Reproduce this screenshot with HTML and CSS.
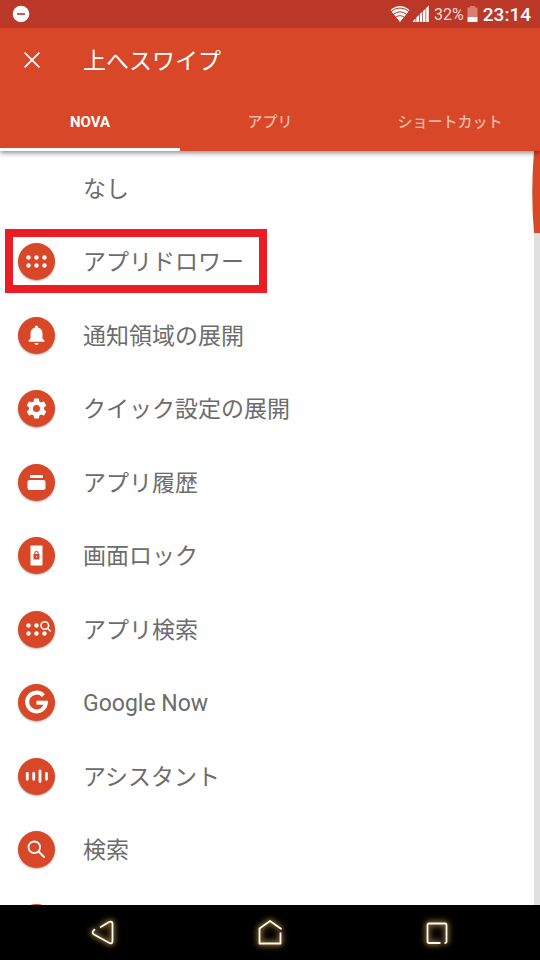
FILE: index.html
```html
<!DOCTYPE html>
<html lang="ja">
<head>
<meta charset="utf-8">
<meta name="viewport" content="width=device-width, initial-scale=1">
<title>上へスワイプ</title>
<link rel="stylesheet" href="styles.css">
</head>
<body>
<header class="top">
  <div class="status">
    <svg class="dnd" width="18" height="18" viewBox="0 0 18 18" aria-hidden="true"><circle cx="9" cy="9" r="8.3" fill="#fff"/><path d="M5 9h8" stroke="#bb3727" stroke-width="1.6"/></svg>
    <div class="status-right">
      <svg width="20" height="18" viewBox="0 0 20 18" aria-hidden="true"><path d="M0.5 5.2Q10-3.2 19.500 5.200L10 17z" fill="#fff"/><path d="M0 7.300Q10-1.400 20 7.300M2.200 10.200Q10 3.400 17.800 10.200M4.500 13Q10 8.300 15.500 13" fill="none" stroke="#bb3727" stroke-width="1"/></svg>
      <svg width="16" height="18" viewBox="0 0 16 18" aria-hidden="true"><path d="M0 17v-1l2.500-2.500V17zM3.300 17v-4.500L6 10v7zM6.800 17V9l2.500-2.300V17zM10 17V6l2.500-2.200V17zM13.200 17V3l2.600-2.600V17z" fill="#fff"/></svg>
      <span class="percent">32%</span>
      <svg class="battery" width="11" height="18" viewBox="0 0 11 18" aria-hidden="true"><path d="M3 1h5v1.500h2.500V12H.500V2.500H3z" fill="#db8071"/><path d="M.500 12h10v5H.500z" fill="#fff"/></svg>
      <time class="clock">23:14</time>
    </div>
  </div>
  <div class="appbar">
    <button class="close" type="button" aria-label="閉じる"><svg width="16" height="16" viewBox="0 0 16 16"><path d="M.600.600l14.800 14.800M15.400.600L.600 15.400" stroke="#fff" stroke-width="1.800"/></svg></button>
    <h1>上へスワイプ</h1>
  </div>
  <nav class="tabs">
    <button type="button" class="tab active">NOVA</button>
    <button type="button" class="tab">アプリ</button>
    <button type="button" class="tab">ショートカット</button>
  </nav>
</header>

<main class="content">
  <ul class="list">
    <li><button type="button" class="row"><span class="blank"></span><span class="label">なし</span></button></li>
    <li class="marked"><button type="button" class="row"><span class="icon"><svg viewBox="0 0 37 37"><g fill="#fff"><circle cx="10.500" cy="14.500" r="2.200"/><circle cx="18.500" cy="14.500" r="2.200"/><circle cx="26.500" cy="14.500" r="2.200"/><circle cx="10.500" cy="22.500" r="2.200"/><circle cx="18.500" cy="22.500" r="2.200"/><circle cx="26.500" cy="22.500" r="2.200"/></g></svg></span><span class="label">アプリドロワー</span></button></li>
    <li><button type="button" class="row"><span class="icon"><svg viewBox="0 0 37 37"><path d="M17 10.500v-.500a1.500 1.500 0 0 1 3 0v.500c3 .700 4.500 3 4.500 6v5l2 2.300v1H10.500v-1l2-2.300v-5c0-3 1.500-5.300 4.500-6zM16.500 26h4a2 2 0 0 1-4 0z" fill="#fff"/></svg></span><span class="label">通知領域の展開</span></button></li>
    <li><button type="button" class="row"><span class="icon"><svg viewBox="0 0 37 37"><path transform="translate(6.500 6.500)" fill="#fff" d="M19.400 13c.040-.320.070-.650.070-1s-.030-.680-.070-1l2.100-1.650c.200-.150.240-.420.120-.640l-2-3.460c-.120-.220-.390-.300-.610-.220l-2.500 1c-.520-.400-1.080-.730-1.690-.980l-.380-2.650A.490.490 0 0 0 14 2h-4c-.250 0-.460.180-.490.420l-.380 2.650c-.610.250-1.170.590-1.690.980l-2.500-1c-.230-.090-.490 0-.610.220l-2 3.460c-.130.220-.070.490.120.640L4.570 11c-.040.320-.070.650-.070 1s.030.680.070 1l-2.110 1.650c-.190.150-.240.420-.120.640l2 3.460c.120.220.390.300.610.220l2.500-1c.520.400 1.080.730 1.690.980l.380 2.650c.030.240.240.420.490.420h4c.250 0 .460-.180.490-.420l.380-2.650c.610-.250 1.170-.590 1.690-.980l2.500 1c.230.090.490 0 .610-.220l2-3.460c.120-.220.070-.490-.120-.640zM12 15.500a3.500 3.500 0 1 1 0-7 3.500 3.500 0 0 1 0 7z"/></svg></span><span class="label">クイック設定の展開</span></button></li>
    <li><button type="button" class="row"><span class="icon"><svg viewBox="0 0 37 37"><g fill="#fff"><rect x="12" y="11" width="13" height="3" rx="1"/><rect x="9.500" y="16" width="18" height="10" rx="2"/></g></svg></span><span class="label">アプリ履歴</span></button></li>
    <li><button type="button" class="row"><span class="icon"><svg viewBox="0 0 37 37"><rect x="12.500" y="8.500" width="12" height="20" rx=".800" fill="#fff"/><rect x="15.500" y="17" width="6" height="5.500" rx=".600" fill="#d84727"/><path d="M16.800 17.500v-1.300a1.700 1.700 0 0 1 3.400 0v1.300" fill="none" stroke="#d84727" stroke-width="1.100"/><circle cx="18.500" cy="19.700" r=".700" fill="#fff"/></svg></span><span class="label">画面ロック</span></button></li>
    <li><button type="button" class="row"><span class="icon"><svg viewBox="0 0 37 37"><g fill="#fff"><circle cx="10.500" cy="14.500" r="2.200"/><circle cx="18.500" cy="14.500" r="2.200"/><circle cx="10.500" cy="22.500" r="2.200"/><circle cx="18.500" cy="22.500" r="2.200"/><circle cx="26.500" cy="22.500" r="2.200"/></g><g fill="none" stroke="#fff" stroke-width="1.600"><circle cx="26.800" cy="14.500" r="3.800"/><path d="M29.500 17.200l3.300 3.300"/></g></svg></span><span class="label">アプリ検索</span></button></li>
    <li><button type="button" class="row"><span class="icon"><svg viewBox="0 0 37 37"><path d="M25.400 11.600A9.400 9.400 0 1 0 27.900 18.700H18.500" fill="none" stroke="#fff" stroke-width="4"/></svg></span><span class="label">Google Now</span></button></li>
    <li><button type="button" class="row"><span class="icon"><svg viewBox="0 0 37 37"><path d="M9.300 15.300v6M15.700 15.300v6M22 13v10.600M28.500 15.300v6" stroke="#fff" stroke-width="2.800" stroke-linecap="round"/></svg></span><span class="label">アシスタント</span></button></li>
    <li><button type="button" class="row"><span class="icon"><svg viewBox="0 0 37 37"><g fill="none" stroke="#fff" stroke-width="1.800"><circle cx="16.300" cy="16.300" r="5.800"/><path d="M20.500 20.500l6.200 6.200"/></g></svg></span><span class="label">検索</span></button></li>
    <li><button type="button" class="row" aria-label="次の項目"><span class="icon"></span></button></li>
  </ul>
  <div class="track"><svg class="thumb" width="8" height="82" viewBox="0 0 8 82" aria-hidden="true"><path d="M2 0Q-1.500 41 2 82H8V0z" fill="#d84727"/></svg></div>
</main>

<nav class="softkeys">
  <button type="button" aria-label="戻る"><svg viewBox="0 0 30 30"><path d="M12 9.500L21 4q3.500-1.200 3.500 2v17q0 3.500-3.500 1.800L6 16.500q-2.500-1.700-.500-4l1.500-1.300"/></svg></button>
  <button type="button" aria-label="ホーム"><svg viewBox="0 0 30 30"><path d="M26 11.500v-.800L15 3 4.500 10.500V25.500H25.500V14.500"/></svg></button>
  <button type="button" aria-label="履歴"><svg viewBox="0 0 30 30"><path d="M18.500 25H7q-1.500 0-1.500-1.500V7Q5.500 5.500 7 5.500H23q1.500 0 1.500 1.500V23.500q0 1.500-2 1.500"/></svg></button>
</nav>
</body>
</html>
```
FILE: styles.css
```css
*,
*::after {
  box-sizing: border-box;
}

body {
  margin: 0;
  height: 100vh;
  display: flex;
  flex-direction: column;
  background: #fff;
  font-family: Roboto, "Noto Sans CJK JP", sans-serif;
  color: #6c6c6c;
}

button {
  margin: 0;
  padding: 0;
  border: 0;
  background: none;
  color: inherit;
  font: inherit;
}

.top {
  position: relative;
  z-index: 1;
  flex: none;
  background: #d84727;
  color: #fff;
  box-shadow: 0 2px 5px rgba(0, 0, 0, 0.45);
}

.status {
  height: 28px;
  padding: 0 9px 0 12px;
  display: flex;
  align-items: center;
  justify-content: space-between;
  background: #bb3727;
}

.status-right {
  display: flex;
  align-items: center;
  gap: 3px;
}

.percent {
  margin-left: 2px;
  padding-top: 2px;
  font-size: 16px;
  line-height: 28px;
  color: #f6ddd9;
}

.clock {
  margin-left: 2px;
  padding-top: 2px;
  font-size: 19px;
  font-weight: 500;
  line-height: 28px;
}

.appbar {
  height: 64px;
  display: flex;
  align-items: center;
}

.close {
  width: 83px;
  height: 48px;
  padding-left: 24px;
  display: flex;
  align-items: center;
}

h1 {
  margin: 0;
  padding-top: 4px;
  font-size: 23px;
  font-weight: 400;
  line-height: 32px;
}

.tabs {
  display: grid;
  grid-template-columns: repeat(3, 1fr);
}

.tab {
  height: 59px;
  padding-top: 4px;
  border-bottom: 3px solid transparent;
  font-size: 15px;
  font-weight: 500;
  line-height: 24px;
  color: #f2b9aa;
}

.tab.active {
  border-color: #fff;
  font-weight: 700;
  color: #fff;
}

.content {
  flex: 1;
  min-height: 0;
  display: flex;
  overflow: hidden;
}

.list {
  flex: 1;
  margin: 0;
  padding: 0;
  list-style: none;
}

.list li {
  position: relative;
  height: 73px;
}

.list li:nth-child(odd):not(:last-child) {
  height: 74px;
}

.row {
  width: 100%;
  height: 100%;
  padding-left: 18px;
  display: flex;
  align-items: center;
  gap: 28px;
  font-size: 23px;
  line-height: 32px;
  text-align: left;
}

.label {
  padding-top: 3px;
}

.icon,
.blank {
  flex: none;
  width: 37px;
  height: 37px;
}

.icon {
  border-radius: 50%;
  background: #d84727;
  box-shadow: 0 1px 2px rgba(0, 0, 0, 0.3);
}

.icon svg {
  display: block;
}

.marked::after {
  content: "";
  position: absolute;
  top: 4px;
  left: 5px;
  width: 262px;
  height: 64px;
  border: 8px solid #ec1c24;
  pointer-events: none;
}

.track {
  width: 8px;
  background: linear-gradient(to right, transparent 2px, #e0e0e0 2px);
}

.thumb {
  display: block;
}

.softkeys {
  flex: none;
  height: 55px;
  padding: 0 20px;
  display: grid;
  grid-template-columns: repeat(3, 1fr);
  place-items: center;
  background: #000;
}

.softkeys button {
  display: flex;
}

.softkeys svg {
  width: 30px;
  height: 30px;
  overflow: visible;
  fill: none;
  stroke: #fffbee;
  stroke-width: 1.8;
  stroke-linejoin: round;
  filter: drop-shadow(0 0 2px #a07c45) drop-shadow(0 0 3px #a07c45);
}
```
